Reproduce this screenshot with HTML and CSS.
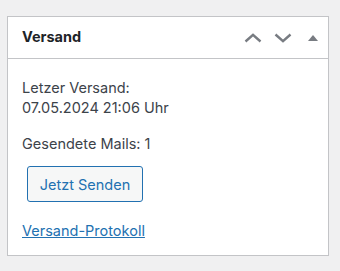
FILE: index.html
```html
<!DOCTYPE html>
<html lang="de">
<head>
    <meta charset="UTF-8">
    <meta name="viewport" content="width=device-width, initial-scale=1.0">
    <title>Versand</title>
    <link rel="stylesheet" href="styles.css">
</head>
<body>
    <div class="postbox">
        <div class="postbox-header">
            <h2 class="hndle">Versand</h2>
            <div class="handle-actions">
                <span class="handle-btn">
                    <svg width="18" height="10" viewBox="0 0 18 10"><path d="M1.5 8.5 L9 1.8 L16.5 8.5" fill="none" stroke="#787c82" stroke-width="2.4"/></svg>
                </span>
                <span class="handle-btn">
                    <svg width="18" height="10" viewBox="0 0 18 10"><path d="M1.5 1.5 L9 8.2 L16.5 1.5" fill="none" stroke="#787c82" stroke-width="2.4"/></svg>
                </span>
                <span class="handle-btn toggle">
                    <svg width="10" height="6" viewBox="0 0 10 6"><path d="M0 6 L5 0 L10 6 Z" fill="#787c82"/></svg>
                </span>
            </div>
        </div>
        <div class="inside">
            <p class="last-sent">Letzer Versand:<br>07.05.2024 21:06 Uhr</p>
            <p class="mail-count">Gesendete Mails: 1</p>
            <div class="actions">
                <button class="button">Jetzt Senden</button>
            </div>
            <a class="log-link" href="#">Versand-Protokoll</a>
        </div>
    </div>
</body>
</html>
```

FILE: styles.css
```css
body {
    margin: 0;
    padding: 16px 11px 15px 7px;
    background-color: #f0f0f1;
    font-family: Inter, "Liberation Sans", Arial, sans-serif;
    font-size: 14.5px;
    color: #3c434a;
}
.postbox {
    background-color: #fff;
    border: 1px solid #c3c4c7;
}
.postbox-header {
    display: flex;
    align-items: center;
    justify-content: space-between;
    height: 41px;
    border-bottom: 1px solid #c3c4c7;
    padding: 0 10px 0 14px;
}
.hndle {
    margin: 0;
    font-size: 14.5px;
    font-weight: 700;
    line-height: 1.4;
    color: #1d2327;
}
.handle-actions {
    display: flex;
    align-items: center;
    gap: 12px;
}
.handle-btn {
    display: flex;
}
.handle-btn.toggle {
    margin-left: 4px;
}
.inside {
    padding: 19px 14px 14px;
    line-height: 20px;
}
.inside p {
    margin: 0;
}
.mail-count {
    margin-top: 16px !important;
}
.actions {
    margin-top: 12px;
    padding-left: 5px;
}
.button {
    width: 116px;
    height: 36px;
    padding: 0 8px;
    font-family: inherit;
    font-size: 14.5px;
    color: #2271b1;
    background-color: #f6f7f7;
    border: 1px solid #2271b1;
    border-radius: 3px;
    cursor: pointer;
}
.log-link {
    display: inline-block;
    margin-top: 19px;
    color: #2271b1;
    text-decoration: underline;
}
```
